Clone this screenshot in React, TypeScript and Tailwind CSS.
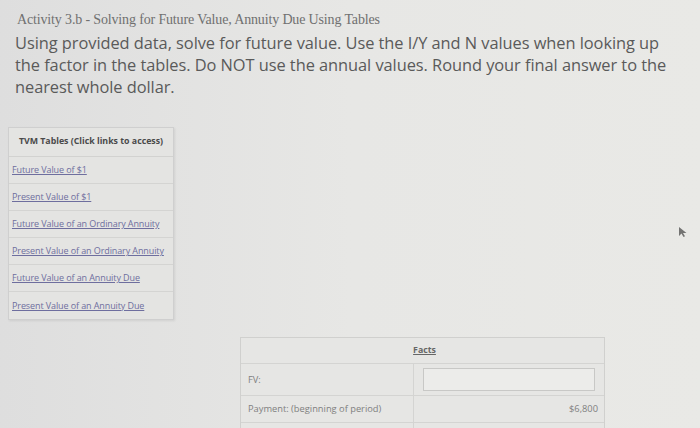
import React from "react";

const links = [
  "Future Value of $1",
  "Present Value of $1",
  "Future Value of an Ordinary Annuity",
  "Present Value of an Ordinary Annuity",
  "Future Value of an Annuity Due",
  "Present Value of an Annuity Due",
];

export default function App() {
  return (
    <div
      className="w-[700px] h-[428px] overflow-hidden relative bg-gradient-to-r from-[#dedede] via-[#e7e7e5] to-[#e9e9e6]"
      style={{ fontFamily: '"Open Sans", sans-serif' }}
    >
      <div className="pt-[11px] pl-[17px]">
        <div
          className="text-[14px] text-[#707070] leading-[17px] tracking-[-0.15px] whitespace-nowrap"
          style={{ fontFamily: '"Liberation Serif", serif' }}
        >
          Activity 3.b - Solving for Future Value, Annuity Due Using Tables
        </div>
        <p className="mt-[4px] text-[16.4px] leading-[22px] text-[#5a5a5a] w-[670px] -ml-[2px] tracking-[-0.05px]">
          Using provided data, solve for future value. Use the I/Y and N values when looking up the
          factor in the tables. Do NOT use the annual values. Round your final answer to the nearest
          whole dollar.
        </p>
      </div>

      <div className="ml-[8px] mt-[29px] w-[166px] border border-[#cfcfcf] bg-[#e4e4e2] shadow-[1px_1px_2px_rgba(0,0,0,0.08)]">
        <div className="h-[29px] flex items-center justify-center border-b border-[#d2d2d0] text-[8.8px] font-bold text-[#4a4a4a] whitespace-nowrap">
          TVM Tables (Click links to access)
        </div>
        {links.map((l, i) => (
          <div
            key={l}
            className={`h-[27px] flex items-center pl-[3px] text-[9px] tracking-[-0.1px] whitespace-nowrap ${i < links.length - 1 ? "border-b border-[#d4d4d2]" : ""}`}
          >
            <span className="underline text-[#6e6e9e]">{l}</span>
          </div>
        ))}
      </div>

      <div className="absolute left-[240px] top-[337px] w-[365px] border border-[#d0d0ce] bg-[#e6e6e4]">
        <div className="h-[26px] flex items-center justify-center border-b border-[#d4d4d2]">
          <span className="text-[8.8px] font-bold underline text-[#666] pl-[4px]">Facts</span>
        </div>
        <div className="h-[32px] flex border-b border-[#d4d4d2]">
          <div className="w-[173px] border-r border-[#d4d4d2] flex items-center pl-[7px] text-[9.3px] text-[#808080]">
            FV:
          </div>
          <div className="flex-1 flex items-center pl-[9px] pr-[9px]">
            <div className="w-full h-[23px] border border-[#c8c8c6] bg-[#ececea]" />
          </div>
        </div>
        <div className="h-[27px] flex border-b border-[#d4d4d2]">
          <div className="w-[173px] border-r border-[#d4d4d2] flex items-center pl-[7px] text-[9.3px] text-[#808080] whitespace-nowrap">
            Payment: (beginning of period)
          </div>
          <div className="flex-1 flex items-center justify-end pr-[6px] text-[9.3px] text-[#808080]">
            $6,800
          </div>
        </div>
        <div className="h-[20px] flex">
          <div className="w-[173px] border-r border-[#d4d4d2]" />
        </div>
      </div>

      <svg className="absolute left-[678px] top-[226px]" width="10" height="12" viewBox="0 0 10 12">
        <path d="M1 1 L1 10 L3.5 7.5 L5.5 11 L7 10.3 L5 7 L8.5 7 Z" fill="#555" opacity="0.8" />
      </svg>
    </div>
  );
}
